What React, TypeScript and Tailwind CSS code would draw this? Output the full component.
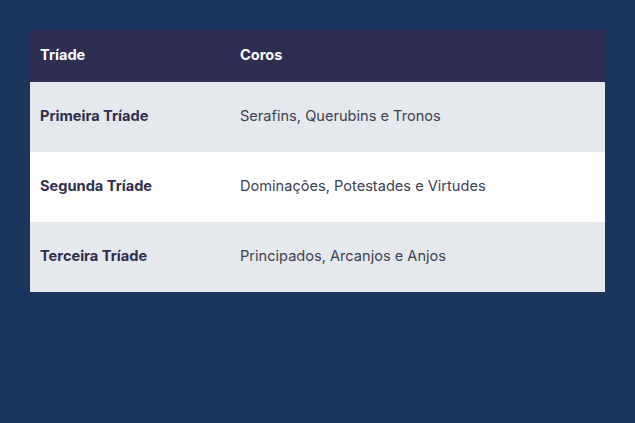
export default function App() {
  const rows = [
    ["Primeira Tríade", "Serafins, Querubins e Tronos", "bg-[#e5e8ec]"],
    ["Segunda Tríade", "Dominações, Potestades e Virtudes", "bg-white"],
    ["Terceira Tríade", "Principados, Arcanjos e Anjos", "bg-[#e5e8ec]"],
  ];
  return (
    <div className="w-[635px] h-[423px] bg-[#1b365d] p-[30px] font-['Inter',sans-serif]">
      <div className="w-[575px] flex flex-col text-[14.6px] leading-[20px]">
        <div className="flex h-[52px] items-center pb-[2px] bg-[#2e2d54] text-white font-bold">
          <div className="w-[200px] px-[10px]">Tríade</div>
          <div className="px-[10px]">Coros</div>
        </div>
        {rows.map(([a, b, bg]) => (
          <div key={a} className={`flex h-[70px] items-center pb-[3px] ${bg}`}>
            <div className="w-[200px] px-[10px] font-bold text-[#2e2d4d]">{a}</div>
            <div className="px-[10px] text-[#3c3f52]">{b}</div>
          </div>
        ))}
      </div>
    </div>
  );
}
